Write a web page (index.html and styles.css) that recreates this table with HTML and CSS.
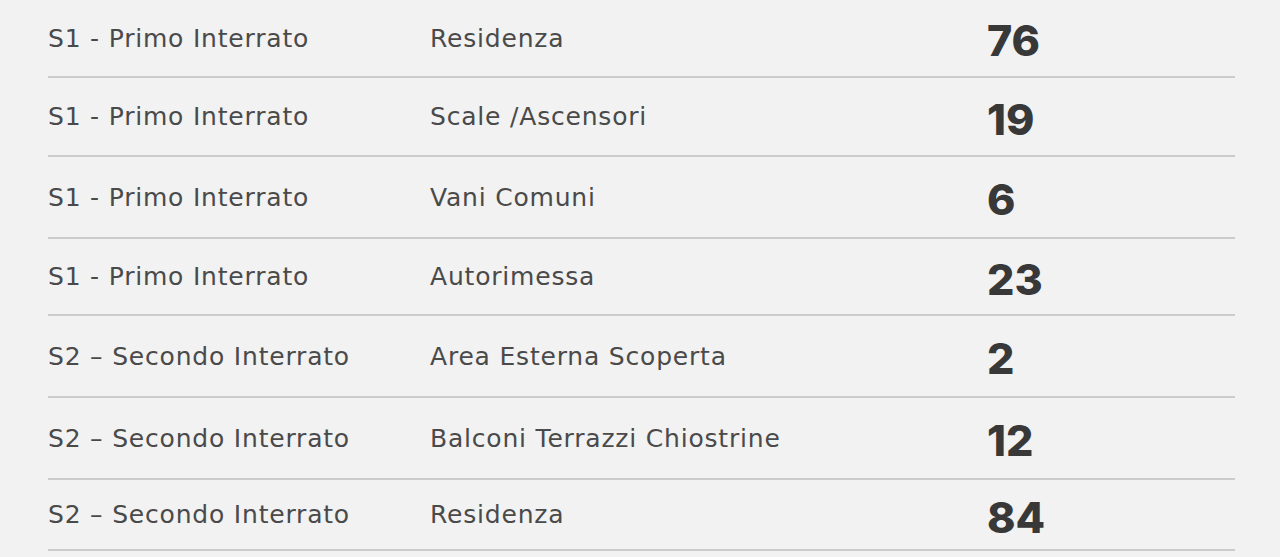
FILE: index.html
```html
<!DOCTYPE html>
<html lang="it">
<head>
<meta charset="utf-8">
<title>Superfici</title>
<link rel="stylesheet" href="styles.css">
</head>
<body>
<div class="table">
  <div class="row r1"><span class="floor">S1 - Primo Interrato</span><span class="use">Residenza</span><span class="num">76</span></div>
  <div class="row r2"><span class="floor">S1 - Primo Interrato</span><span class="use">Scale /Ascensori</span><span class="num">19</span></div>
  <div class="row r3"><span class="floor">S1 - Primo Interrato</span><span class="use">Vani Comuni</span><span class="num">6</span></div>
  <div class="row r4"><span class="floor">S1 - Primo Interrato</span><span class="use">Autorimessa</span><span class="num">23</span></div>
  <div class="row r5"><span class="floor">S2 – Secondo Interrato</span><span class="use">Area Esterna Scoperta</span><span class="num">2</span></div>
  <div class="row r6"><span class="floor">S2 – Secondo Interrato</span><span class="use">Balconi Terrazzi Chiostrine</span><span class="num">12</span></div>
  <div class="row r7"><span class="floor">S2 – Secondo Interrato</span><span class="use">Residenza</span><span class="num">84</span></div>
</div>
</body>
</html>
```
FILE: styles.css
```css
html, body {
  margin: 0;
  padding: 0;
  background: #f2f2f2;
}
body {
  font-family: "DejaVu Sans", Inter, sans-serif;
  color: #4a4a4a;
  height: 557px;
  overflow: hidden;
}
.table {
  margin-left: 48px;
  width: 1187px;
  display: flex;
  flex-direction: column;
}
.row {
  display: grid;
  grid-template-columns: 382px 555px 1fr;
  align-items: center;
  border-bottom: 2px solid #cbcbcb;
}
.r1 { height: 76px; }
.r2 { height: 77px; }
.r3 { height: 80px; }
.r4 { height: 75px; }
.r5 { height: 80px; }
.r6 { height: 80px; }
.r7 { height: 69px; }
.floor, .use {
  font-size: 25px;
  font-weight: 400;
  letter-spacing: 0.8px;
}
.num {
  font-family: Inter, sans-serif;
  font-size: 43px;
  font-weight: 800;
  color: #383838;
  padding-top: 4px;
  padding-left: 2px;
}
```
